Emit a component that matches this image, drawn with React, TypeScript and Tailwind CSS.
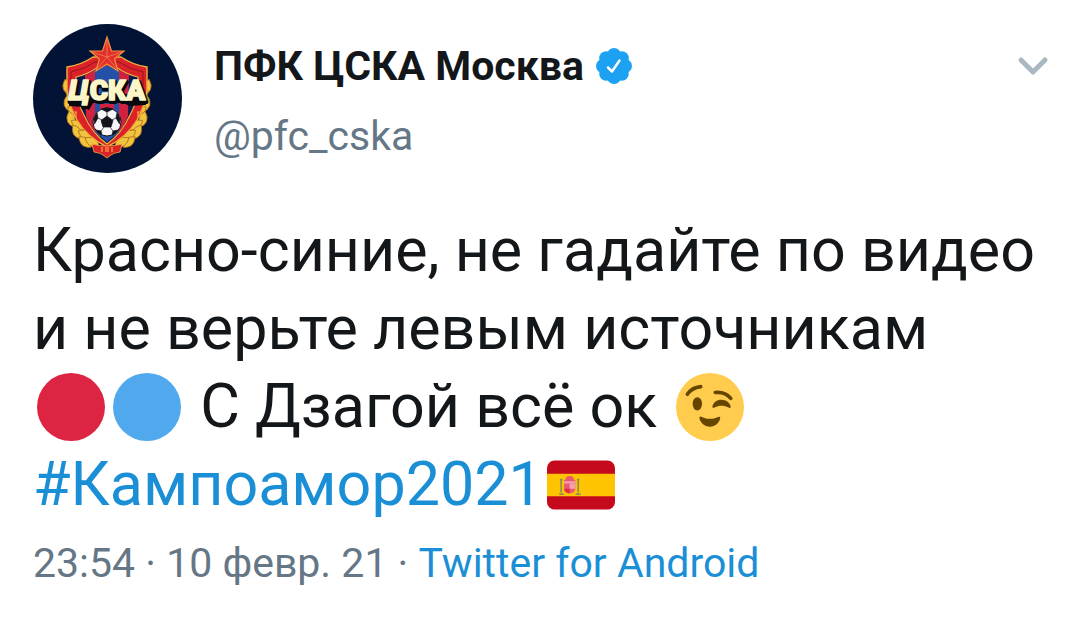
import React, { FC } from "react";

const emojiClass = "inline-block w-[68px] h-[68px] mx-1 align-[-14px]";

const leaves = [
  { x: 34, y: 63, r: -15 },
  { x: 39, y: 72, r: -50 },
  { x: 35, y: 79, r: -5 },
  { x: 41, y: 88, r: -50 },
  { x: 38, y: 95, r: -15 },
  { x: 45, y: 101, r: -55 },
  { x: 44, y: 108, r: -30 },
  { x: 52, y: 111, r: -55 },
  { x: 52, y: 118, r: -50 },
  { x: 59, y: 118, r: -60 },
];

const Laurel: FC = () => (
  <g fill="#f0c43c" stroke="#a8621a" strokeWidth="0.7">
    {leaves.map((leaf) => (
      <path
        key={`${leaf.x}-${leaf.y}`}
        d="M0 -8Q5 -3 4 2Q3 6 0 8Q-3 6 -4 2Q-5 -3 0 -8Z"
        transform={`translate(${leaf.x} ${leaf.y}) rotate(${leaf.r})`}
      />
    ))}
  </g>
);

const Avatar: FC = () => (
  <svg
    viewBox="0 0 149 149"
    className="w-[149px] h-[149px] shrink-0"
    role="img"
    aria-label="ПФК ЦСКА"
  >
    <circle cx="74.5" cy="74.5" r="74.5" fill="#021336" />
    <Laurel />
    <g transform="translate(148 0) scale(-1 1)">
      <Laurel />
    </g>
    {/* shield */}
    <path
      d="M34 43Q48 41 60 33H88Q100 41 114 43V66Q112 82 104 96Q94 113 74 123Q54 113 44 96Q36 82 34 66Z"
      fill="#dc2229"
      stroke="#eeb13c"
      strokeWidth="1.4"
    />
    <path
      d="M38 62V48Q52 45 62 38H86Q96 45 110 48V62"
      fill="none"
      stroke="#8e1522"
      strokeWidth="1"
    />
    <path
      d="M43 53Q56 50 65 43H83Q92 50 105 53V68Q103 80 97 91Q89 109 74 120Q59 109 51 91Q45 80 43 68Z"
      fill="#0a1a4c"
      stroke="#eeb13c"
      strokeWidth="1.2"
    />
    <path d="M52 51L62 46V108Q56 101 53 92ZM86 46L96 51L95 92Q92 101 86 108Z" fill="#d0213f" />
    <path d="M62 46L68 42H80L86 46V108L74 118L62 108Z" fill="#2550a8" />
    <path d="M67 80H81V108H67Z" fill="#d0213f" />
    <g stroke="#f5a53a" strokeWidth="1.2">
      <path d="M39 88l2 6M43 88v6M38 88h6M105 88v6M109 88l-2 6M104 88h6" />
    </g>
    {/* star */}
    <path
      d="M74 13L78.5 27H91L81.5 35L85 47L74 40L63 47L66.5 35L57 27H69.5Z"
      fill="#e3302c"
      stroke="#f0903c"
      strokeWidth="1.2"
    />
    <path
      d="M74 33V15M74 33L89 28M74 33L84 45M74 33L64 45M74 33L59 28"
      stroke="#f0764a"
      strokeWidth="0.9"
    />
    {/* lettering */}
    <path d="M37 70H111L113 81L96 82L91 79H60L56 86L50 83L36 82Z" fill="#07080d" />
    <g
      fontSize="28"
      textAnchor="middle"
      strokeLinejoin="round"
      className="font-['Roboto',sans-serif] font-black"
    >
      <text x="75" y="78" fill="#07080d" stroke="#07080d" strokeWidth="4">
        <tspan className="italic">Ц</tspan>СКА
      </text>
      <text x="74" y="76" fill="#fbf5c8" stroke="#fbf5c8" strokeWidth="1.6">
        <tspan className="italic">Ц</tspan>СКА
      </text>
    </g>
    {/* ball */}
    <circle cx="74" cy="98" r="14" fill="#f7f7f7" stroke="#11131c" strokeWidth="1" />
    <g fill="#11131c" stroke="#11131c" strokeWidth="0.7">
      <path d="M74 92L80 96.5L78 103H70L68 96.5Z" />
      <path d="M68 85L74 88L80 85Q74 82.500 68 85Z" />
      <path d="M61 94L64 89L65 94L61.500 100Z" />
      <path d="M87 94L84 89L83 94L86.500 100Z" />
      <path d="M63 106L68 107L69 111Q65 110 63 106Z" />
      <path d="M85 106L80 107L79 111Q83 110 85 106Z" />
      <path d="M74 92V87M79 96L83 94M77 103L80 107M71 103L68 107M69 96L65 94" />
    </g>
    {/* ribbon */}
    <path
      d="M59 120Q74 124 89 120L87 128Q80 129 78 131L74 134L70 131Q68 129 61 128Z"
      fill="#dc2229"
      stroke="#eeb13c"
      strokeWidth="0.8"
    />
    <path d="M69 123v5M73 123v5M75 123v5M79 123v5" stroke="#f5a53a" strokeWidth="1.2" />
  </svg>
);

const VerifiedBadge: FC = () => (
  <svg
    viewBox="0 0 36 36"
    className="w-9 h-9 shrink-0"
    role="img"
    aria-label="Подтверждённый аккаунт"
  >
    <g fill="#1da1f2">
      <circle cx="18" cy="18" r="14" />
      <circle cx="18" cy="7" r="7" />
      <circle cx="25.800" cy="10.200" r="7" />
      <circle cx="29" cy="18" r="7" />
      <circle cx="25.800" cy="25.800" r="7" />
      <circle cx="18" cy="29" r="7" />
      <circle cx="10.200" cy="25.800" r="7" />
      <circle cx="7" cy="18" r="7" />
      <circle cx="10.200" cy="10.200" r="7" />
    </g>
    <path
      d="M12 19.500L16 23.500L23.500 12.500"
      fill="none"
      stroke="#fff"
      strokeWidth="2.500"
      strokeLinecap="round"
      strokeLinejoin="round"
    />
  </svg>
);

const Circle: FC<{ color: string; label: string }> = ({ color, label }) => (
  <svg viewBox="0 0 36 36" className={emojiClass} role="img" aria-label={label}>
    <circle cx="18" cy="18" r="18" fill={color} />
  </svg>
);

const Wink: FC = () => (
  <svg viewBox="0 0 36 36" className={emojiClass} role="img" aria-label="Подмигивание">
    <circle cx="18" cy="18" r="18" fill="#ffcc4d" />
    <g fill="#664500">
      <ellipse cx="11.300" cy="16.300" rx="2.500" ry="3.500" />
      <path d="M19.300 17.500C20 15.500 21.500 14.200 24 14.200C26.500 14.200 28.300 15.700 28.900 17.500C29.200 18.500 28.500 18.800 27.800 18.300C25.500 17 22.800 17 20.400 18.300C19.700 18.700 19 18.300 19.300 17.500Z" />
      <path d="M12.500 23.300C12.800 22.900 13.300 23.100 13.700 23.300C16.500 24.600 19.500 24.600 22.300 23.300C22.900 23 23.600 23.200 23.400 24C22.900 26.600 20.700 28.400 18 28.400C15.200 28.400 12.900 26.600 12.400 24Z" />
    </g>
    <path
      d="M6 11.300C7.500 9 10 7.500 13.100 7.200M20.800 10.300C24 10 27 11 29 13.400"
      fill="none"
      stroke="#664500"
      strokeWidth="1.900"
      strokeLinecap="round"
    />
  </svg>
);

const SpainFlag: FC = () => (
  <svg viewBox="0 0 36 36" className={emojiClass} role="img" aria-label="Испания">
    <rect y="5" width="36" height="26" rx="4" fill="#c60a1d" />
    <path d="M0 12H36V24H0Z" fill="#ffc400" />
    <path d="M9 15.500Q12 13 15 15.500V19.500Q15 22.500 12 22.500Q9 22.500 9 19.500Z" fill="#ea596e" />
    <path d="M9 16H15V17.200H9Z" fill="#f4a2b2" />
    <path d="M12 17.200H15V20H12Z" fill="#f4a2b2" />
    <path d="M9 20H12V22.500Q9.500 22.300 9 20Z" fill="#dd2e44" />
    <path d="M10 15.200Q9.500 13.500 12 13.300Q14.500 13.500 14 15.200Z" fill="#ea596e" />
    <path
      d="M7.500 15.500V22M16.500 15.500V22M6.500 22.800H8.800M15.200 22.800H17.800M6.800 15.200H8.200M15.800 15.200H17.200"
      fill="none"
      stroke="#8f8f5c"
      strokeWidth="0.900"
    />
  </svg>
);

const App: FC = () => {
  return (
    <article className="min-h-screen bg-white px-[33px] py-6 font-['Roboto',sans-serif] text-[#14171a]">
      <header className="flex items-start">
        <Avatar />
        <div className="ml-8 mt-[18px] flex-1">
          <div className="flex items-center gap-3">
            <h1 className="text-[41px] leading-[48px] font-bold">ПФК ЦСКА Москва</h1>
            <VerifiedBadge />
          </div>
          <a
            href="#profile"
            className="mt-[22px] block text-[41px] leading-[48px] text-[#657786]"
          >
            @pfc_cska
          </a>
        </div>
        <button type="button" aria-label="Ещё" className="mt-[30px] -mr-[18px] p-0">
          <svg viewBox="0 0 34 24" className="w-[34px] h-6">
            <path
              d="M5 6L17 18L29 6"
              fill="none"
              stroke="#aab8c2"
              strokeWidth="5"
              strokeLinecap="round"
              strokeLinejoin="round"
            />
          </svg>
        </button>
      </header>

      <p className="mt-[38px] -mr-4 text-[61px] leading-[78px]">
        Красно-синие, не гадайте по видео и не верьте левым источникам{" "}
        <span className="whitespace-nowrap">
          <Circle color="#dd2443" label="Красный круг" />
          <Circle color="#50a9ec" label="Синий круг" />
        </span>{" "}
        С Дзагой всё ок <Wink />{" "}
        <span className="whitespace-nowrap">
          <a href="#kampoamor2021" className="text-[#1b8fd6]">
            #Кампоамор2021
          </a>
          <SpainFlag />
        </span>
      </p>

      <footer className="mt-4 text-[41px] leading-[48px] text-[#657786]">
        <time dateTime="2021-02-10T23:54">23:54 · 10 февр. 21</time> ·{" "}
        <a href="#source" className="text-[#1b8fd6]">
          Twitter for Android
        </a>
      </footer>
    </article>
  );
};

export default App;
